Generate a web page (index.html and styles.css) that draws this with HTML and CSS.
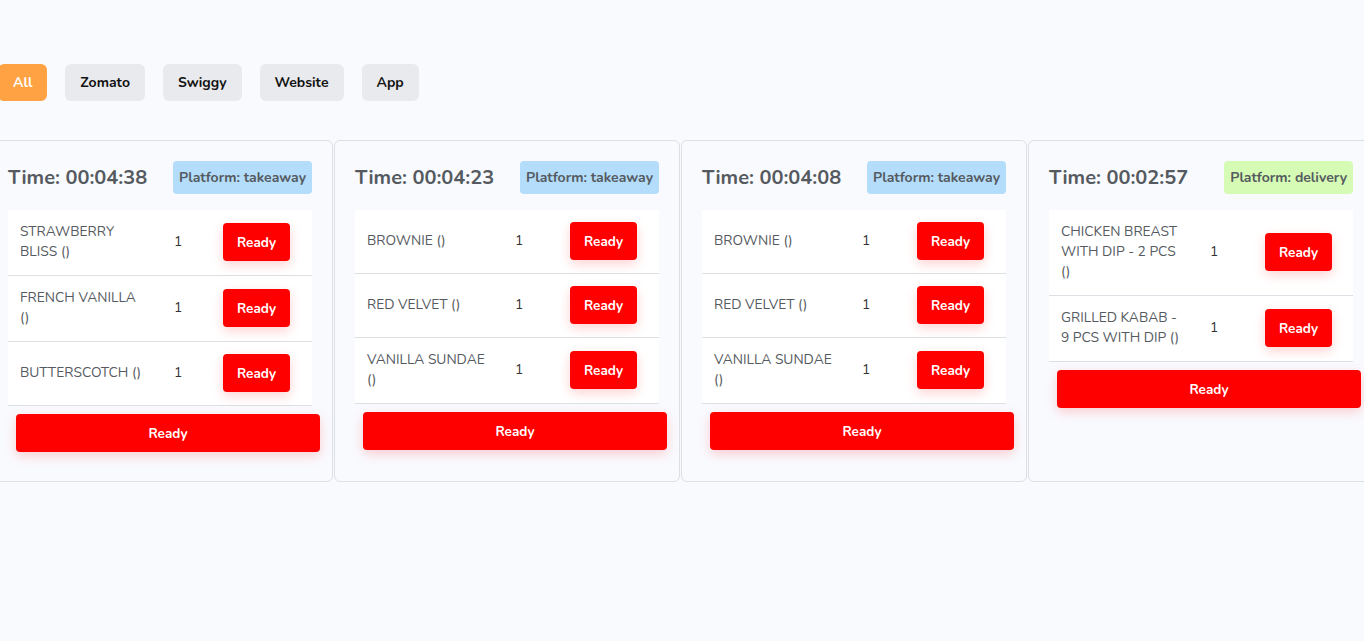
FILE: index.html
```html
<!DOCTYPE html>
<html lang="en">
<head>
  <meta charset="UTF-8" />
  <meta name="viewport" content="width=device-width, initial-scale=1.0"/>
  <title>Kitchen Orders</title>
  <link rel="stylesheet" href="styles.css">
</head>
<body>

<main class="kitchen">
  <div class="filters">
    <button class="filter active">All</button>
    <button class="filter">Zomato</button>
    <button class="filter">Swiggy</button>
    <button class="filter">Website</button>
    <button class="filter">App</button>
  </div>

  <div class="orders">
    <div class="order-card">
      <div class="order-head">
        <h2>Time: 00:04:38</h2>
        <span class="badge takeaway">Platform: takeaway</span>
      </div>
      <div class="items items-narrow">
        <div class="item-row">
          <span class="item-name">STRAWBERRY BLISS ()</span>
          <span class="item-qty">1</span>
          <span><button class="btn-ready">Ready</button></span>
        </div>
        <div class="item-row">
          <span class="item-name">FRENCH VANILLA ()</span>
          <span class="item-qty">1</span>
          <span><button class="btn-ready">Ready</button></span>
        </div>
        <div class="item-row">
          <span class="item-name">BUTTERSCOTCH ()</span>
          <span class="item-qty">1</span>
          <span><button class="btn-ready">Ready</button></span>
        </div>
      </div>
      <button class="btn-ready btn-all">Ready</button>
    </div>

    <div class="order-card">
      <div class="order-head">
        <h2>Time: 00:04:23</h2>
        <span class="badge takeaway">Platform: takeaway</span>
      </div>
      <div class="items">
        <div class="item-row">
          <span class="item-name">BROWNIE ()</span>
          <span class="item-qty">1</span>
          <span><button class="btn-ready">Ready</button></span>
        </div>
        <div class="item-row">
          <span class="item-name">RED VELVET ()</span>
          <span class="item-qty">1</span>
          <span><button class="btn-ready">Ready</button></span>
        </div>
        <div class="item-row">
          <span class="item-name">VANILLA SUNDAE ()</span>
          <span class="item-qty">1</span>
          <span><button class="btn-ready">Ready</button></span>
        </div>
      </div>
      <button class="btn-ready btn-all">Ready</button>
    </div>

    <div class="order-card">
      <div class="order-head">
        <h2>Time: 00:04:08</h2>
        <span class="badge takeaway">Platform: takeaway</span>
      </div>
      <div class="items">
        <div class="item-row">
          <span class="item-name">BROWNIE ()</span>
          <span class="item-qty">1</span>
          <span><button class="btn-ready">Ready</button></span>
        </div>
        <div class="item-row">
          <span class="item-name">RED VELVET ()</span>
          <span class="item-qty">1</span>
          <span><button class="btn-ready">Ready</button></span>
        </div>
        <div class="item-row">
          <span class="item-name">VANILLA SUNDAE ()</span>
          <span class="item-qty">1</span>
          <span><button class="btn-ready">Ready</button></span>
        </div>
      </div>
      <button class="btn-ready btn-all">Ready</button>
    </div>

    <div class="order-card">
      <div class="order-head">
        <h2>Time: 00:02:57</h2>
        <span class="badge delivery">Platform: delivery</span>
      </div>
      <div class="items items-wide">
        <div class="item-row">
          <span class="item-name">CHICKEN BREAST WITH DIP - 2 PCS ()</span>
          <span class="item-qty">1</span>
          <span><button class="btn-ready">Ready</button></span>
        </div>
        <div class="item-row">
          <span class="item-name">GRILLED KABAB - 9 PCS WITH DIP ()</span>
          <span class="item-qty">1</span>
          <span><button class="btn-ready">Ready</button></span>
        </div>
      </div>
      <button class="btn-ready btn-all">Ready</button>
    </div>
  </div>
</main>

</body>
</html>
```

FILE: styles.css
```css
:root {
  --bg-color: #f9fafe;
  --text-color: #555a60;
  --border-color: #dcdfe3;
  --ready-red: #ff0000;
}

* {
  box-sizing: border-box;
  margin: 0;
  padding: 0;
}

html, body {
  height: 100%;
  font-family: "Nunito", Lato, "Open Sans", sans-serif;
  background-color: var(--bg-color);
  color: var(--text-color);
  overflow: hidden;
}

.kitchen {
  padding-top: 64px;
}

.filters {
  display: flex;
  gap: 18px;
  margin-left: -2px;
}

.filter {
  font-family: inherit;
  font-size: 14px;
  font-weight: 700;
  color: #111;
  background: #e8eaed;
  border: none;
  border-radius: 6px;
  height: 37px;
  padding: 0 15px;
  cursor: pointer;
}

.filter.active {
  background: #ffa244;
  color: #fff;
}

.orders {
  display: grid;
  grid-template-columns: repeat(4, 346px);
  gap: 1px;
  margin-top: 39px;
  margin-left: -13px;
}

.order-card {
  border: 1px solid var(--border-color);
  border-radius: 6px;
  padding: 20px;
  height: 342px;
}

.order-head {
  display: flex;
  align-items: center;
  justify-content: space-between;
  height: 33px;
  margin-bottom: 16px;
}

.order-head h2 {
  font-size: 20px;
  font-weight: 700;
  color: var(--text-color);
}

.badge {
  font-size: 14px;
  font-weight: 700;
  padding: 0 6px;
  height: 33px;
  line-height: 33px;
  border-radius: 4px;
  color: var(--text-color);
}

.badge.takeaway {
  background: #b3ddfb;
}

.badge.delivery {
  background: #d5fbb4;
}

.items {
  background: #fff;
}

.item-row {
  display: grid;
  grid-template-columns: 148px 55px 1fr;
  align-items: center;
  border-bottom: 1px solid var(--border-color);
  padding: 12px 0 13px;
  font-size: 13.8px;
  line-height: 20px;
}

.items-narrow .item-row {
  grid-template-columns: 154px 49px 1fr;
}

.items-wide .item-row {
  grid-template-columns: 149px 55px 1fr;
}

.item-name {
  padding: 0 12px;
}

.items-narrow .item-name {
  padding-right: 18px;
}

.item-qty {
  padding: 0 12px;
  color: #333;
}

.item-row > span:last-child {
  padding-left: 12px;
}

.btn-ready {
  font-family: inherit;
  font-size: 13.5px;
  font-weight: 700;
  color: #fff;
  background: var(--ready-red);
  border: none;
  border-radius: 4px;
  width: 67px;
  height: 38px;
  box-shadow: 0 4px 12px rgba(255, 0, 0, 0.18);
  cursor: pointer;
  display: block;
}

.btn-all {
  width: 100%;
  height: 38px;
  margin: 8px 0 0 8px;
}
```
